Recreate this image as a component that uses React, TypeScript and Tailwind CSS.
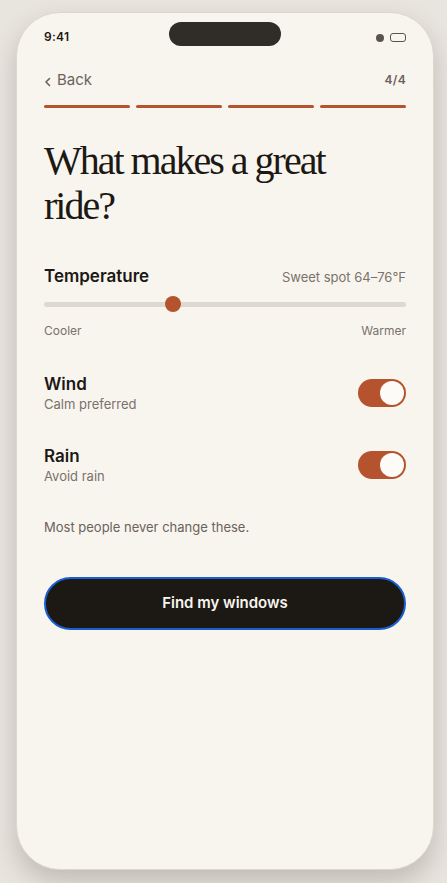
import React from "react"

const sans = { fontFamily: "Inter, 'Noto Sans', sans-serif" }

function Toggle() {
  return (
    <div className="flex h-[28px] w-[48px] items-center justify-end rounded-full bg-[#b5532f] px-[2px]">
      <div className="h-[24px] w-[24px] rounded-full bg-[#fdfbf7]" />
    </div>
  )
}

function ToggleRow({ title, sub }: { title: string; sub: string }) {
  return (
    <div className="flex items-center justify-between">
      <div>
        <div className="text-[17px] font-semibold leading-[22px] text-[#1c1814]">{title}</div>
        <div className="text-[13px] leading-[18px] text-[#7a716a]">{sub}</div>
      </div>
      <Toggle />
    </div>
  )
}

export default function App() {
  return (
    <div className="flex h-[883px] w-[447px] bg-[#e8e4de] pl-[16px] pt-[12px]" style={sans}>
      <div className="flex h-[858px] w-[418px] flex-col rounded-[44px] border border-[#dcd7cf] bg-[#f8f5ef] shadow-[0_12px_24px_rgba(80,70,60,0.25)]">
        {/* status bar */}
        <div className="flex h-[50px] items-start justify-between px-[27px]">
          <span className="mt-[16px] w-[60px] text-[12px] font-semibold leading-[16px] tracking-wide text-[#1c1814]">9:41</span>
          <div className="mt-[9px] h-[24px] w-[112px] rounded-full bg-[#302c28]" />
          <div className="mt-[20px] flex w-[60px] items-center justify-end gap-[6px]">
            <div className="h-[8px] w-[8px] rounded-full bg-[#5a544e]" />
            <div className="h-[9px] w-[16px] rounded-[3px] border border-[#5a544e]" />
          </div>
        </div>

        <div className="flex flex-col px-[27px]">
          {/* nav */}
          <div className="mt-[6px] flex items-center justify-between">
            <div className="flex items-center gap-[5px] text-[#6b625a]">
              <svg width="8" height="10" viewBox="0 0 8 10" className="mt-[3px]">
                <path d="M5.5 1.5 L2 5 L5.5 8.5" fill="none" stroke="#6b625a" strokeWidth="1.6" strokeLinecap="round" strokeLinejoin="round" />
              </svg>
              <span className="text-[15px]">Back</span>
            </div>
            <span className="text-[12px] font-semibold tracking-wide text-[#6b625a]">4/4</span>
          </div>

          {/* progress */}
          <div className="mt-[13px] grid grid-cols-4 gap-[6px]">
            <div className="h-[3px] rounded-full bg-[#b5532f]" />
            <div className="h-[3px] rounded-full bg-[#b5532f]" />
            <div className="h-[3px] rounded-full bg-[#b5532f]" />
            <div className="h-[3px] rounded-full bg-[#b5532f]" />
          </div>

          {/* title */}
          <h1
            className="mt-[30px] w-[300px] text-[40px] leading-[45px] tracking-[-0.05em] text-[#1c1814]"
            style={{ fontFamily: "'Liberation Serif', 'DejaVu Serif', serif" }}
          >
            What makes a great ride?
          </h1>

          {/* temperature */}
          <div className="mt-[36px] flex items-baseline justify-between">
            <span className="text-[17px] font-semibold text-[#1c1814]">Temperature</span>
            <span className="text-[13px] text-[#7a716a]">Sweet spot 64–76°F</span>
          </div>
          <div className="relative mt-[13px] h-[5px] rounded-full bg-[#ddd8d0]">
            <div className="absolute left-[121px] top-[-6px] h-[16px] w-[16px] rounded-full bg-[#b5532f]" />
          </div>
          <div className="mt-[15px] flex justify-between text-[12px] text-[#7a716a]">
            <span>Cooler</span>
            <span>Warmer</span>
          </div>

          <div className="mt-[33px] flex flex-col gap-[32px]">
            <ToggleRow title="Wind" sub="Calm preferred" />
            <ToggleRow title="Rain" sub="Avoid rain" />
          </div>

          <p className="mt-[33px] text-[13px] text-[#6b625a]">Most people never change these.</p>

          <button className="mt-[39px] flex h-[53px] items-center justify-center rounded-full border-2 border-[#1a5fd0] bg-[#1c1814] text-[15px] font-semibold text-[#f8f5ef]">
            Find my windows
          </button>
        </div>
      </div>
    </div>
  )
}
